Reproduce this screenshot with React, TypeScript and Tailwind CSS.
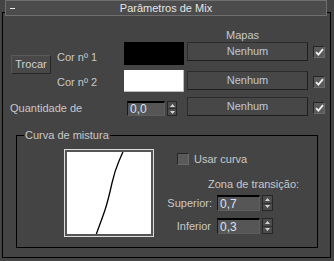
import React from 'react';

const FONT = '"Liberation Sans", Arial, sans-serif';

function Check({ checked }: { checked?: boolean }) {
  return (
    <div className="flex h-[12px] w-[12px] items-center justify-center border border-[#262626] border-b-[#6a6a6a] border-r-[#6a6a6a] bg-[#5a5a5a]">
      {checked ? (
        <svg width="9" height="8" viewBox="0 0 9 8">
          <path d="M1 4.2 L3.4 6.6 L8 1.2" fill="none" stroke="#f0f0f0" strokeWidth="1.8" />
        </svg>
      ) : null}
    </div>
  );
}

function MapButton() {
  return (
    <div className="flex h-[19px] w-[121px] items-center justify-center border border-[#2c2c2c] border-b-[#1f1f1f] border-r-[#1f1f1f] bg-[#474747] text-[11px] text-[#bcc8dc]">
      Nenhum
    </div>
  );
}

function Spinner({ w = 10, h = 16 }: { w?: number; h?: number }) {
  return (
    <div
      className="flex flex-col border border-[#262626] bg-[#4c4c4c]"
      style={{ width: w, height: h }}
    >
      <div className="flex flex-1 items-center justify-center border-b border-[#2e2e2e]">
        <svg width="5" height="3" viewBox="0 0 5 3">
          <path d="M0 3 L2.5 0 L5 3 Z" fill="#d4d4d4" />
        </svg>
      </div>
      <div className="flex flex-1 items-center justify-center">
        <svg width="5" height="3" viewBox="0 0 5 3">
          <path d="M0 0 L2.5 3 L5 0 Z" fill="#d4d4d4" />
        </svg>
      </div>
    </div>
  );
}

function NumField({ value, w, h }: { value: string; w: number; h: number }) {
  return (
    <div
      className="flex items-center border border-[#5e5e5e] border-l-[#1a1a1a] border-t-2 border-t-black bg-[#565656] pl-[2px] text-[12px] leading-none text-[#d8e2f4]"
      style={{ width: w, height: h }}
    >
      {value}
    </div>
  );
}

export default function App() {
  return (
    <div className="h-[261px] w-[334px] overflow-hidden bg-[#444444] text-[11px] text-[#c8c8c8]" style={{ fontFamily: FONT }}>
      <div className="relative z-10 ml-[5px] flex h-[16px] w-[322px] items-center border border-[#6e6e6e] bg-[#4c4c4c]">
        <div className="ml-[4px] h-[1px] w-[5px] bg-[#e8e8e8]" />
        <div className="flex-1 pr-[9px] text-center text-[11px] leading-[14px] text-[#e4e4e4]">Parâmetros de Mix</div>
      </div>

      <div className="-mt-[4px] ml-[2px] h-[246px] w-[329px] border border-black">
        <div className="ml-[223px] mt-[15px] h-[14px] leading-[14px]">Mapas</div>

        <div className="grid grid-cols-[54px_67px_63px_126px_12px] grid-rows-[23px_22px_19px] gap-y-[5px]">
          <div className="row-span-2 ml-[8px] mt-[13px] flex h-[19px] w-[40px] items-center justify-center self-start border border-[#262626] border-l-[#5a5a5a] border-t-[#5a5a5a] bg-[#484848] text-[#d0d0d0]">
            Trocar
          </div>

          <div className="mt-[8px] leading-[14px]">Cor nº 1</div>
          <div className="h-[23px] w-[60px] bg-black" />
          <MapButton />
          <div className="mt-[4px]">
            <Check checked />
          </div>

          <div className="mt-[5px] leading-[14px]">Cor nº 2</div>
          <div className="h-[22px] w-[60px] border-b border-r border-[#bcbcbc] bg-white" />
          <div className="mt-[1px]">
            <MapButton />
          </div>
          <div className="mt-[6px]">
            <Check checked />
          </div>

          <div className="col-span-2 mt-[4px] pl-[7px] leading-[14px]">Quantidade de</div>
          <div className="ml-[3px] mt-[4px] flex gap-[2px]">
            <NumField value="0,0" w={38} h={15} />
            <Spinner w={10} h={15} />
          </div>
          <MapButton />
          <div className="mt-[5px]">
            <Check checked />
          </div>
        </div>

        <fieldset className="ml-[13px] mt-[12px] h-[120px] w-[302px] border border-black">
          <legend className="ml-[7px] px-[1px] leading-[14px] text-[#c8c8c8]">Curva de mistura</legend>
          <div className="flex">
            <div className="ml-[47px] mt-[7px] h-[88px] w-[90px] border border-[#dcdcdc]">
              <div className="h-full w-full border-2 border-[#555555] bg-white">
                <svg width="84" height="82" viewBox="0 0 84 82" className="block">
                  <path
                    d="M29 83 C 33 72, 36 64, 38 58 S 43 40, 45 31 S 49 16, 52 9 S 55 2, 56 0"
                    fill="none"
                    stroke="#000"
                    strokeWidth="1.3"
                  />
                </svg>
              </div>
            </div>

            <div className="ml-[13px] flex flex-col">
              <div className="ml-[10px] mt-[11px] flex h-[12px] items-center gap-[5px]">
                <Check />
                <span className="leading-[14px]">Usar curva</span>
              </div>
              <div className="ml-[41px] mt-[12px] leading-[14px]">Zona de transição:</div>
              <div className="mt-[4px] flex items-center">
                <div className="w-[45px] text-right leading-[14px]">Superior:</div>
                <div className="ml-[5px] flex gap-[2px]">
                  <NumField value="0,7" w={43} h={16} />
                  <Spinner w={11} h={16} />
                </div>
              </div>
              <div className="mt-[7px] flex items-center">
                <div className="w-[44px] text-right leading-[14px]">Inferior</div>
                <div className="ml-[6px] flex gap-[2px]">
                  <NumField value="0,3" w={43} h={16} />
                  <Spinner w={11} h={16} />
                </div>
              </div>
            </div>
          </div>
        </fieldset>
      </div>
    </div>
  );
}
